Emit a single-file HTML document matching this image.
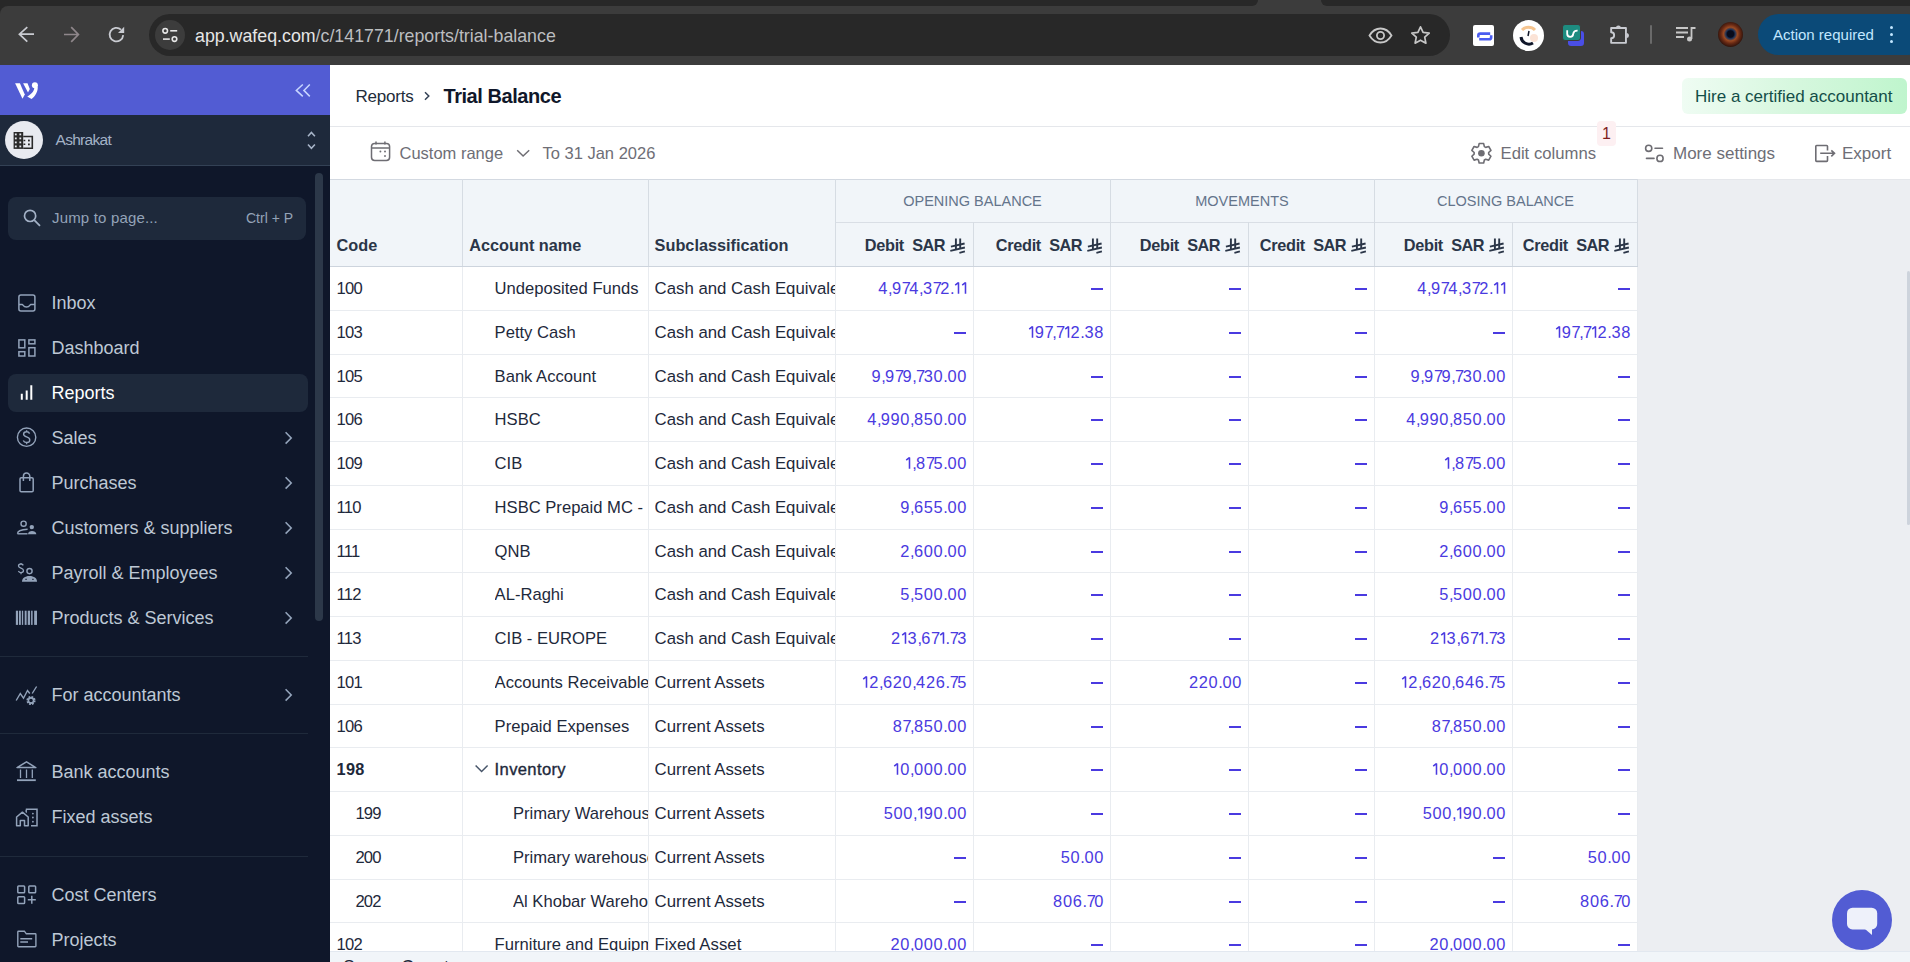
<!DOCTYPE html>
<html><head><meta charset="utf-8"><style>
html,body{margin:0;padding:0;width:1910px;height:962px;overflow:hidden;background:#fff;font-family:"Liberation Sans", sans-serif;}
div{box-sizing:border-box}
</style></head><body>
<div style="position:absolute;left:0px;top:0px;width:1910px;height:65px;background:#3c3c3c;"></div><div style="position:absolute;left:0px;top:0px;width:1258px;height:6px;background:#282828;border-bottom-right-radius:6px;"></div><div style="position:absolute;left:1321px;top:0px;width:589px;height:6px;background:#282828;border-bottom-left-radius:6px;"></div><div style="position:absolute;left:0px;top:6px;width:8px;height:8px;background:#282828;"></div><div style="position:absolute;left:0px;top:6px;width:16px;height:16px;background:#3c3c3c;border-top-left-radius:8px;"></div><div style="position:absolute;left:149px;top:14px;width:1301px;height:42px;background:#282828;border-radius:21px;"></div><div style="position:absolute;left:155px;top:20px;width:30px;height:30px;background:#3c3c3c;border-radius:15px;"></div><svg style="position:absolute;left:160px;top:25px;" width="20" height="20" viewBox="0 0 20 20" fill="none"><circle cx="5.2" cy="5.8" r="2.3" stroke="#e6e6e6" stroke-width="1.6"/><path d="M10.2 5.8h7" stroke="#e6e6e6" stroke-width="1.6"/><path d="M3 14.1h6.8" stroke="#e6e6e6" stroke-width="1.6"/><circle cx="14.5" cy="14.1" r="2.3" stroke="#e6e6e6" stroke-width="1.6"/></svg><svg style="position:absolute;left:14px;top:22px;" width="120" height="26" viewBox="0 0 120 26" fill="none"><path d="M20 12.2H5.2M13.3 5.2L5.4 12.2 13.3 19.6" stroke="#c9cbd1" stroke-width="1.7"/><path d="M50 12.5H64.4M57.2 5.2L64.4 12.5 57.2 19.8" stroke="#8f878b" stroke-width="1.7"/><path d="M109.2 13.2A6.8 6.8 0 1 1 107 7.6" stroke="#c9cbd1" stroke-width="1.8"/><path d="M104 11H110.2V4.8Z" fill="#c9cbd1"/></svg><div style="position:absolute;left:195px;top:23px;font-size:17.8px;line-height:27px;color:#bcbec0;font-weight:normal;letter-spacing:0px;white-space:nowrap;"><span style="color:#e6e6e6">app.wafeq.com</span>/c/141771/reports/trial-balance</div><svg style="position:absolute;left:1368px;top:27px;" width="25" height="17" viewBox="0 0 25 17" fill="none"><path d="M1.5 8.5C4.5 3.5 8 1.5 12.5 1.5S20.5 3.5 23.5 8.5C20.5 13.5 17 15.5 12.5 15.5S4.5 13.5 1.5 8.5Z" stroke="#c7c7c7" stroke-width="1.8"/><circle cx="12.5" cy="8.5" r="3.6" stroke="#c7c7c7" stroke-width="1.8"/></svg><svg style="position:absolute;left:1410px;top:25px;" width="21" height="20" viewBox="0 0 21 20" fill="none"><path d="M10.5 1.8l2.6 5.6 6.1.7-4.5 4.1 1.2 6-5.4-3-5.4 3 1.2-6-4.5-4.1 6.1-.7z" stroke="#c7c7c7" stroke-width="1.7" stroke-linejoin="round"/></svg><div style="position:absolute;left:1473px;top:25px;width:21px;height:21px;background:#ffffff;border-radius:2px;"></div><svg style="position:absolute;left:1473px;top:25px;" width="21" height="21" viewBox="0 0 21 21" fill="none"><path d="M5.3 12.6V10.6Q5.3 8.6 7.3 8.6H17.2" stroke="#4a5cf0" stroke-width="2.6"/><path d="M18.2 10.2V12.2Q18.2 14.3 16.2 14.3H6.2" stroke="#4a5cf0" stroke-width="2.6"/></svg><div style="position:absolute;left:1513px;top:20px;width:31px;height:31px;background:#ffffff;border-radius:50%;"></div><svg style="position:absolute;left:1516px;top:23px;" width="25" height="25" viewBox="0 0 25 25" fill="none"><path d="M6 7a9 9 0 0 1 13 0" stroke="#f6c590" stroke-width="3"/><path d="M5 14a8 8 0 0 0 12 6" stroke="#10172a" stroke-width="3"/><path d="M13 8l-1 5" stroke="#10172a" stroke-width="1.5"/><circle cx="18" cy="15" r="4" fill="#fbe3d6"/></svg><div style="position:absolute;left:1568px;top:31px;width:16px;height:15px;background:#4a4ee6;border-radius:3px;"></div><div style="position:absolute;left:1562px;top:24px;width:18.5px;height:16.5px;background:#1d8c80;border-radius:3px;border:1px solid #3c3c3c;"></div><svg style="position:absolute;left:1562px;top:24px;" width="20" height="18" viewBox="0 0 20 18" fill="none"><path d="M5.2 6.2V9.8A3 3 0 0 0 11.2 9.8Q11.8 6.4 15.6 6.6" stroke="#ffffff" stroke-width="1.8"/></svg><svg style="position:absolute;left:1606px;top:22px;" width="26" height="26" viewBox="0 0 26 26" fill="none"><path d="M5.15 6.05H19.95V20.85H5.15V16.2A3 3 0 0 0 5.15 10.2Z" stroke="#c9cbd1" stroke-width="1.9" stroke-linejoin="round"/><path d="M9.9 6.1A2.5 2.5 0 0 1 14.9 6.1Z" fill="#c9cbd1"/><path d="M20.4 10.9A2.5 2.5 0 0 1 20.4 15.9Z" fill="#c9cbd1"/></svg><div style="position:absolute;left:1650px;top:25px;width:2px;height:19px;background:#6a6a6a;border-radius:1px;"></div><svg style="position:absolute;left:1675px;top:26px;" width="22" height="16" viewBox="0 0 22 16" fill="none"><path d="M1 2h12M1 6.5h12M1 11h8" stroke="#c7c7c7" stroke-width="1.8"/><path d="M16.5 13V2h4" stroke="#c7c7c7" stroke-width="1.8"/><circle cx="14.5" cy="13" r="2.5" fill="#c7c7c7"/></svg><div style="position:absolute;left:1718px;top:22px;width:25px;height:25px;border-radius:50%;background:radial-gradient(circle at 50% 48%,#070b1c 0 18%,#1d3358 26%,#9a4a22 38%,#6a2a14 52%,#2e130c 72%,#1a0d0a 100%);"></div><div style="position:absolute;left:1758px;top:14px;width:170px;height:41px;background:#0b4a78;border-radius:21px;"></div><div style="position:absolute;left:1773px;top:24px;font-size:15.0px;line-height:22px;color:#c2e7ff;font-weight:normal;letter-spacing:0px;white-space:nowrap;">Action required</div><div style="position:absolute;left:1889.5px;top:25.9px;width:3.4px;height:3.4px;border-radius:50%;background:#c2e7ff"></div><div style="position:absolute;left:1889.5px;top:32.9px;width:3.4px;height:3.4px;border-radius:50%;background:#c2e7ff"></div><div style="position:absolute;left:1889.5px;top:39.9px;width:3.4px;height:3.4px;border-radius:50%;background:#c2e7ff"></div><div style="position:absolute;left:0px;top:65px;width:330px;height:897px;background:#0f172a;"></div><div style="position:absolute;left:0px;top:65px;width:330px;height:50px;background:#525cd3;"></div><div style="position:absolute;left:0px;top:115px;width:330px;height:50px;background:#1e293b;"></div><div style="position:absolute;left:0px;top:165px;width:330px;height:1px;background:#334155;"></div><svg style="position:absolute;left:10px;top:76px;" width="34" height="28" viewBox="0 0 34 28" fill="none"><path d="M5.1 7.3H9.9L14.8 18.6 12.5 22.7Z" fill="#fff"/><path d="M13.1 7.3H17.5L19.8 13.1 18 16.6Z" fill="#fff"/><circle cx="24.9" cy="9.3" r="3" fill="#fff"/><path d="M27.6 10.5C28.5 15 25 20.5 21.5 23L17.2 20.4C21 18.5 24 15.5 24.3 12Z" fill="#fff"/></svg><svg style="position:absolute;left:288.8px;top:78px;" width="30" height="26" viewBox="0 0 30 26" fill="none"><path d="M13.8 6.5L7.3 12.4 13.8 18.4M20.8 6.5L14.9 12.4 20.8 18.4" stroke="#c8d6ff" stroke-width="1.5"/></svg><div style="position:absolute;left:5px;top:121px;width:38px;height:38px;background:#e8eaf0;border-radius:50%;"></div><svg style="position:absolute;left:4px;top:118px;" width="42" height="44" viewBox="0 0 42 44" fill="none"><rect x="9.6" y="14" width="9.6" height="16.9" fill="#2a2a2a"/><rect x="10.9" y="15.5" width="1.8" height="1.8" fill="#e8eaf0"/><rect x="10.9" y="19.5" width="1.8" height="1.8" fill="#e8eaf0"/><rect x="10.9" y="23.5" width="1.8" height="1.8" fill="#e8eaf0"/><rect x="10.9" y="27.5" width="1.8" height="1.8" fill="#e8eaf0"/><rect x="15.4" y="15.5" width="1.8" height="1.8" fill="#e8eaf0"/><rect x="15.4" y="19.5" width="1.8" height="1.8" fill="#e8eaf0"/><rect x="15.4" y="23.5" width="1.8" height="1.8" fill="#e8eaf0"/><rect x="15.4" y="27.5" width="1.8" height="1.8" fill="#e8eaf0"/><path d="M19.2 18.5H28.3V30.2H19.2" stroke="#2a2a2a" stroke-width="1.6"/><rect x="24" y="21.6" width="1.8" height="1.8" fill="#2a2a2a"/><rect x="24" y="25.5" width="1.8" height="1.8" fill="#2a2a2a"/><path d="M19.5 22.4h1.8M19.5 26.3h1.8" stroke="#2a2a2a" stroke-width="1.5"/></svg><div style="position:absolute;left:55.5px;top:128px;font-size:15.5px;line-height:23px;color:#a3b2c7;font-weight:normal;letter-spacing:-0.7px;white-space:nowrap;">Ashrakat</div><svg style="position:absolute;left:296px;top:125px;" width="30" height="30" viewBox="0 0 30 30" fill="none"><path d="M12 11.2L15.4 7.5 18.9 11.2M12 19.5L15.4 23.3 18.9 19.5" stroke="#a7b4c8" stroke-width="1.6"/></svg><div style="position:absolute;left:315px;top:173px;width:8px;height:448px;background:#2c3849;border-radius:4px;"></div><div style="position:absolute;left:8px;top:197px;width:298px;height:43px;background:#1e293b;border-radius:8px;"></div><svg style="position:absolute;left:14px;top:200px;" width="36" height="36" viewBox="0 0 36 36" fill="none"><circle cx="16.1" cy="15.9" r="5.6" stroke="#a3b1c6" stroke-width="1.7"/><path d="M20.3 20.2L26 25.8" stroke="#a3b1c6" stroke-width="1.8"/></svg><div style="position:absolute;left:52px;top:207px;font-size:15.0px;line-height:22px;color:#94a3b8;font-weight:normal;letter-spacing:0.17px;white-space:nowrap;">Jump to page...</div><div style="position:absolute;left:246px;top:208px;font-size:14.0px;line-height:21px;color:#94a3b8;font-weight:normal;letter-spacing:0px;white-space:nowrap;">Ctrl + P</div><div style="position:absolute;left:8px;top:374px;width:300px;height:37.5px;background:#1e293b;border-radius:8px;"></div><div style="position:absolute;left:51.5px;top:290px;font-size:18.0px;line-height:27px;color:#bec8d5;font-weight:normal;letter-spacing:0px;white-space:nowrap;">Inbox</div><div style="position:absolute;left:51.5px;top:335px;font-size:18.0px;line-height:27px;color:#bec8d5;font-weight:normal;letter-spacing:0px;white-space:nowrap;">Dashboard</div><div style="position:absolute;left:51.5px;top:380px;font-size:18.0px;line-height:27px;color:#ffffff;font-weight:normal;letter-spacing:0px;white-space:nowrap;">Reports</div><div style="position:absolute;left:51.5px;top:425px;font-size:18.0px;line-height:27px;color:#bec8d5;font-weight:normal;letter-spacing:0px;white-space:nowrap;">Sales</div><svg style="position:absolute;left:280px;top:429.5px" width="18" height="16" viewBox="0 0 18 16" fill="none"><path d="M5.6 2.3L11.2 8 5.6 13.6" stroke="#93a3ba" stroke-width="1.6"/></svg><div style="position:absolute;left:51.5px;top:470px;font-size:18.0px;line-height:27px;color:#bec8d5;font-weight:normal;letter-spacing:0px;white-space:nowrap;">Purchases</div><svg style="position:absolute;left:280px;top:474.5px" width="18" height="16" viewBox="0 0 18 16" fill="none"><path d="M5.6 2.3L11.2 8 5.6 13.6" stroke="#93a3ba" stroke-width="1.6"/></svg><div style="position:absolute;left:51.5px;top:515px;font-size:18.0px;line-height:27px;color:#bec8d5;font-weight:normal;letter-spacing:0px;white-space:nowrap;">Customers &amp; suppliers</div><svg style="position:absolute;left:280px;top:519.5px" width="18" height="16" viewBox="0 0 18 16" fill="none"><path d="M5.6 2.3L11.2 8 5.6 13.6" stroke="#93a3ba" stroke-width="1.6"/></svg><div style="position:absolute;left:51.5px;top:560px;font-size:18.0px;line-height:27px;color:#bec8d5;font-weight:normal;letter-spacing:0px;white-space:nowrap;">Payroll &amp; Employees</div><svg style="position:absolute;left:280px;top:564.5px" width="18" height="16" viewBox="0 0 18 16" fill="none"><path d="M5.6 2.3L11.2 8 5.6 13.6" stroke="#93a3ba" stroke-width="1.6"/></svg><div style="position:absolute;left:51.5px;top:605px;font-size:18.0px;line-height:27px;color:#bec8d5;font-weight:normal;letter-spacing:0px;white-space:nowrap;">Products &amp; Services</div><svg style="position:absolute;left:280px;top:609.5px" width="18" height="16" viewBox="0 0 18 16" fill="none"><path d="M5.6 2.3L11.2 8 5.6 13.6" stroke="#93a3ba" stroke-width="1.6"/></svg><div style="position:absolute;left:51.5px;top:682px;font-size:18.0px;line-height:27px;color:#bec8d5;font-weight:normal;letter-spacing:0px;white-space:nowrap;">For accountants</div><svg style="position:absolute;left:280px;top:686.5px" width="18" height="16" viewBox="0 0 18 16" fill="none"><path d="M5.6 2.3L11.2 8 5.6 13.6" stroke="#93a3ba" stroke-width="1.6"/></svg><div style="position:absolute;left:51.5px;top:759px;font-size:18.0px;line-height:27px;color:#bec8d5;font-weight:normal;letter-spacing:0px;white-space:nowrap;">Bank accounts</div><div style="position:absolute;left:51.5px;top:804px;font-size:18.0px;line-height:27px;color:#bec8d5;font-weight:normal;letter-spacing:0px;white-space:nowrap;">Fixed assets</div><div style="position:absolute;left:51.5px;top:882px;font-size:18.0px;line-height:27px;color:#bec8d5;font-weight:normal;letter-spacing:0px;white-space:nowrap;">Cost Centers</div><div style="position:absolute;left:51.5px;top:927px;font-size:18.0px;line-height:27px;color:#bec8d5;font-weight:normal;letter-spacing:0px;white-space:nowrap;">Projects</div><div style="position:absolute;left:0px;top:656px;width:308px;height:1px;background:#1f2a3b;"></div><div style="position:absolute;left:0px;top:733px;width:308px;height:1px;background:#1f2a3b;"></div><div style="position:absolute;left:0px;top:856px;width:308px;height:1px;background:#1f2a3b;"></div><svg style="position:absolute;left:12px;top:288px;" width="30" height="30" viewBox="0 0 30 30" fill="none"><rect x="6.9" y="6.9" width="16" height="16" rx="2" stroke="#93a3ba" stroke-width="1.5"/><path d="M7 16.5H10.3C11 16.5 11.3 19 14.5 19S18 16.5 18.7 16.5H22.8" stroke="#93a3ba" stroke-width="1.5"/></svg><svg style="position:absolute;left:12px;top:333px;" width="30" height="30" viewBox="0 0 30 30" fill="none"><rect x="6.9" y="6.9" width="5.9" height="7.9" stroke="#93a3ba" stroke-width="1.5"/><rect x="16.9" y="6.9" width="6" height="3.9" stroke="#93a3ba" stroke-width="1.5"/><rect x="6.9" y="18.7" width="5.9" height="4.3" stroke="#93a3ba" stroke-width="1.5"/><rect x="16.9" y="14.7" width="6" height="8.3" stroke="#93a3ba" stroke-width="1.5"/></svg><svg style="position:absolute;left:12px;top:380px;" width="30" height="30" viewBox="0 0 30 30" fill="none"><path d="M9.8 13.8V19.8M14.7 10.5V19.8M19.3 5.2V19.8" stroke="#fff" stroke-width="2"/></svg><svg style="position:absolute;left:12px;top:423px;" width="30" height="30" viewBox="0 0 30 30" fill="none"><circle cx="14.6" cy="14.2" r="9.2" stroke="#93a3ba" stroke-width="1.4"/><path d="M17.6 10.6C17 9.3 15.9 8.8 14.6 8.8 12.8 8.8 11.6 9.8 11.6 11.3 11.6 14.5 17.8 13.4 17.8 16.9 17.8 18.5 16.4 19.5 14.6 19.5 13 19.5 11.8 18.8 11.3 17.5M14.6 7.2V8.8M14.6 19.5V21.2" stroke="#93a3ba" stroke-width="1.4"/></svg><svg style="position:absolute;left:12px;top:468px;" width="30" height="30" viewBox="0 0 30 30" fill="none"><rect x="8" y="9.8" width="13.2" height="14" rx="1.3" stroke="#93a3ba" stroke-width="1.5"/><path d="M11.4 13V8.2A3.2 3.2 0 0 1 17.8 8.2V13" stroke="#93a3ba" stroke-width="1.5"/></svg><svg style="position:absolute;left:12px;top:513px;" width="30" height="30" viewBox="0 0 30 30" fill="none"><circle cx="11.6" cy="10.7" r="2.6" stroke="#93a3ba" stroke-width="1.4"/><path d="M5.5 20.8C5.5 18 8.5 16.6 15.6 16.3" stroke="#93a3ba" stroke-width="1.4"/><path d="M5.5 20.8H15.5" stroke="#93a3ba" stroke-width="1.4"/><circle cx="19.8" cy="14.1" r="2.2" fill="#93a3ba"/><path d="M16 21.2C16 18.8 18 17.9 20 17.9S24.3 18.8 24.3 21.2Z" fill="#93a3ba"/></svg><svg style="position:absolute;left:12px;top:558px;" width="30" height="30" viewBox="0 0 30 30" fill="none"><path d="M11.3 7.4C10.8 6.4 10 6 9 6 7.6 6 6.5 6.8 6.5 8 6.5 10.5 11.5 9.7 11.5 12.5 11.5 13.8 10.4 14.6 9 14.6 7.7 14.6 6.9 14 6.4 13M9 4.9V6M9 14.6V16.2" stroke="#93a3ba" stroke-width="1.3"/><circle cx="17.5" cy="13.1" r="2.6" stroke="#93a3ba" stroke-width="1.4"/><path d="M10 23.8C10 20.3 13 18.1 17.5 18.1S25 20.3 25 23.8Z" fill="#93a3ba"/><path d="M13.3 21.3h1.5M20.2 21.3h1.5" stroke="#0f172a" stroke-width="1"/></svg><svg style="position:absolute;left:12px;top:603px;" width="30" height="30" viewBox="0 0 30 30" fill="none"><rect x="3.85" y="7.7" width="2.15" height="14.2" fill="#93a3ba"/><rect x="6.92" y="7.7" width="1.92" height="14.2" fill="#93a3ba"/><rect x="9.85" y="7.7" width="1.31" height="14.2" fill="#93a3ba"/><rect x="12.69" y="7.7" width="1.92" height="14.2" fill="#93a3ba"/><rect x="15.77" y="7.7" width="2.31" height="14.2" fill="#93a3ba"/><rect x="19.08" y="7.7" width="1.54" height="14.2" fill="#93a3ba"/><rect x="22.15" y="7.7" width="2.85" height="14.2" fill="#93a3ba"/></svg><svg style="position:absolute;left:12px;top:680px;" width="30" height="32" viewBox="0 0 30 32" fill="none"><path d="M4.2 20.5L8.3 13.5 11.5 18.2 15.5 10.5 17.8 13.5M20.2 13.5L24.6 6.5" stroke="#93a3ba" stroke-width="1.4"/><circle cx="19" cy="20.5" r="3.4" stroke="#93a3ba" stroke-width="2.4" stroke-dasharray="1.6 1.07"/><circle cx="19" cy="20.5" r="2.6" stroke="#93a3ba" stroke-width="1.6"/></svg><svg style="position:absolute;left:12px;top:758px;" width="30" height="30" viewBox="0 0 30 30" fill="none"><path d="M5 9.6L14.5 3.8 23.8 9.6Z" stroke="#93a3ba" stroke-width="1.5" stroke-linejoin="round"/><path d="M8.5 11.5V20M14.5 11.5V20M20.3 11.5V20" stroke="#93a3ba" stroke-width="1.3"/><path d="M5 22.2H23.8" stroke="#93a3ba" stroke-width="1.8"/></svg><svg style="position:absolute;left:12px;top:803px;" width="30" height="30" viewBox="0 0 30 30" fill="none"><path d="M4.6 22.8V14L10.4 9.2 16.2 14V22.8H12.5V17.5H8.3V22.8Z" stroke="#93a3ba" stroke-width="1.5" stroke-linejoin="round"/><path d="M14.2 6.8V9H13.8M13.8 6.2H25V22.8H19" stroke="#93a3ba" stroke-width="1.5"/><circle cx="20.9" cy="10.6" r="0.9" fill="#93a3ba"/><circle cx="20.9" cy="14.5" r="0.9" fill="#93a3ba"/><circle cx="20.9" cy="18.7" r="0.9" fill="#93a3ba"/></svg><svg style="position:absolute;left:12px;top:880px;" width="30" height="30" viewBox="0 0 30 30" fill="none"><rect x="5.8" y="5.9" width="6.8" height="6.8" rx="0.8" stroke="#93a3ba" stroke-width="1.5"/><rect x="16.8" y="5.9" width="6.8" height="6.8" rx="0.8" stroke="#93a3ba" stroke-width="1.5"/><rect x="5.8" y="16.8" width="6.8" height="6.8" rx="0.8" stroke="#93a3ba" stroke-width="1.5"/><path d="M19.8 15.8V23.8M15.8 19.8H23.8" stroke="#93a3ba" stroke-width="1.5"/></svg><svg style="position:absolute;left:12px;top:925px;" width="30" height="30" viewBox="0 0 30 30" fill="none"><path d="M5.8 6.9C5.8 6.5 6.1 6.2 6.5 6.2H12.4L14.3 8.8H23.2C23.6 8.8 23.9 9.1 23.9 9.5V21C23.9 21.4 23.6 21.7 23.2 21.7H6.5C6.1 21.7 5.8 21.4 5.8 21Z" stroke="#93a3ba" stroke-width="1.4"/><path d="M8.3 13.7H20.2M8.3 16.9H16" stroke="#93a3ba" stroke-width="1.5"/></svg><div style="position:absolute;left:330px;top:65px;width:1580px;height:897px;background:#ffffff;"></div><div style="position:absolute;left:330px;top:126px;width:1580px;height:1px;background:#e5e7eb;"></div><div style="position:absolute;left:355.5px;top:84px;font-size:17.0px;line-height:26px;color:#222c3a;font-weight:normal;letter-spacing:-0.2px;white-space:nowrap;">Reports</div><svg style="position:absolute;left:418px;top:88px;" width="18" height="16" viewBox="0 0 18 16" fill="none"><path d="M7 4.2L10.8 8 7 11.8" stroke="#334155" stroke-width="1.5"/></svg><div style="position:absolute;left:443.5px;top:81px;font-size:20.0px;line-height:30px;color:#0f172a;font-weight:bold;letter-spacing:-0.45px;white-space:nowrap;">Trial Balance</div><div style="position:absolute;left:1682px;top:78px;width:225px;height:36px;border-radius:6px;background:linear-gradient(90deg,#effcf3 0%,#d6f7de 50%,#bff5cd 100%);"></div><div style="position:absolute;left:1695px;top:84px;font-size:17.0px;line-height:26px;color:#134e48;font-weight:normal;letter-spacing:0px;white-space:nowrap;">Hire a certified accountant</div><svg style="position:absolute;left:366px;top:138px;" width="30" height="28" viewBox="0 0 30 28" fill="none"><rect x="5.5" y="5.4" width="18.1" height="17" rx="3.2" stroke="#6e6d73" stroke-width="1.5"/><path d="M5.5 10H23.6M10 3.5V6.5M18.9 3.5V6.5" stroke="#6e6d73" stroke-width="1.5"/><circle cx="14.4" cy="13.5" r="0.95" fill="#6e6d73"/><circle cx="19" cy="13.5" r="0.95" fill="#6e6d73"/><circle cx="19" cy="18" r="0.95" fill="#6e6d73"/></svg><div style="position:absolute;left:399.5px;top:141px;font-size:16.5px;line-height:25px;color:#6e6e76;font-weight:normal;letter-spacing:0px;white-space:nowrap;">Custom range</div><svg style="position:absolute;left:514px;top:144px;" width="18" height="18" viewBox="0 0 18 18" fill="none"><path d="M3.2 6.3L9.1 12 15.2 6.3" stroke="#6e6d73" stroke-width="1.5"/></svg><div style="position:absolute;left:542.5px;top:141px;font-size:16.5px;line-height:25px;color:#6e6e76;font-weight:normal;letter-spacing:0px;white-space:nowrap;">To 31 Jan 2026</div><svg style="position:absolute;left:1466px;top:139px;" width="30" height="28" viewBox="0 0 30 28" fill="none"><path d="M13.15 4.56 L17.65 4.56 L18.37 7.63 L19.69 8.39 L22.71 7.48 L24.96 11.38 L22.66 13.54 L22.66 15.06 L24.96 17.22 L22.71 21.12 L19.69 20.21 L18.37 20.97 L17.65 24.04 L13.15 24.04 L12.43 20.97 L11.11 20.21 L8.09 21.12 L5.84 17.22 L8.14 15.06 L8.14 13.54 L5.84 11.38 L8.09 7.48 L11.11 8.39 L12.43 7.63Z" stroke="#6e6d73" stroke-width="1.6" stroke-linejoin="round"/><circle cx="15.4" cy="14.3" r="3.3" fill="#6e6d73"/></svg><div style="position:absolute;left:1500.5px;top:141px;font-size:16.7px;line-height:25px;color:#6e6e76;font-weight:normal;letter-spacing:0px;white-space:nowrap;">Edit columns</div><div style="position:absolute;left:1597px;top:121px;width:19px;height:25px;background:#fdf0f2;border-radius:4px;"></div><div style="position:absolute;left:1602px;top:122px;font-size:16.0px;line-height:24px;color:#7f1d1d;font-weight:normal;letter-spacing:0px;white-space:nowrap;">1</div><svg style="position:absolute;left:1640px;top:139px;" width="30" height="28" viewBox="0 0 30 28" fill="none"><circle cx="8.7" cy="9.3" r="3.1" stroke="#6e6d73" stroke-width="1.6"/><path d="M15 9.3H22.5M6.5 19.4H14" stroke="#6e6d73" stroke-width="1.6" stroke-linecap="round"/><circle cx="20" cy="19.4" r="3.1" stroke="#6e6d73" stroke-width="1.6"/></svg><div style="position:absolute;left:1673px;top:141px;font-size:17.0px;line-height:26px;color:#6e6e76;font-weight:normal;letter-spacing:0px;white-space:nowrap;">More settings</div><svg style="position:absolute;left:1810px;top:139px;" width="30" height="28" viewBox="0 0 30 28" fill="none"><path d="M17.5 11.5V7.3C17.5 6.8 17.1 6.5 16.6 6.5H6.6C6.1 6.5 5.8 6.8 5.8 7.3V21.6C5.8 22.1 6.1 22.4 6.6 22.4H16.6C17.1 22.4 17.5 22.1 17.5 21.6V17" stroke="#6e6d73" stroke-width="1.6"/><path d="M10.2 14.3H24M21.3 11.3L24.5 14.3 21.3 17.4" stroke="#6e6d73" stroke-width="1.6"/></svg><div style="position:absolute;left:1842px;top:141px;font-size:17.0px;line-height:26px;color:#6e6e76;font-weight:normal;letter-spacing:0px;white-space:nowrap;">Export</div><div style="position:absolute;left:1638px;top:179px;width:272px;height:772px;background:#eceef2;"></div><div style="position:absolute;left:330px;top:179px;width:1580px;height:1px;background:#e5e7eb;"></div><div style="position:absolute;left:330px;top:179px;width:1308px;height:87px;background:#f1f5f9;"></div><div style="position:absolute;left:330px;top:179px;width:1308px;height:1px;background:#d3d9e1;"></div><div style="position:absolute;left:330px;top:266px;width:1308px;height:1px;background:#cdd4dd;"></div><div style="position:absolute;left:835px;top:222px;width:803px;height:1px;background:#d9dee5;"></div><div style="position:absolute;left:462px;top:179px;width:1px;height:87px;background:#d6dce3;"></div><div style="position:absolute;left:648px;top:179px;width:1px;height:87px;background:#d6dce3;"></div><div style="position:absolute;left:835px;top:179px;width:1px;height:87px;background:#d6dce3;"></div><div style="position:absolute;left:973px;top:222px;width:1px;height:44px;background:#d6dce3;"></div><div style="position:absolute;left:1110px;top:179px;width:1px;height:87px;background:#d6dce3;"></div><div style="position:absolute;left:1248px;top:222px;width:1px;height:44px;background:#d6dce3;"></div><div style="position:absolute;left:1374px;top:179px;width:1px;height:87px;background:#d6dce3;"></div><div style="position:absolute;left:1512px;top:222px;width:1px;height:44px;background:#d6dce3;"></div><div style="position:absolute;left:1637px;top:179px;width:1px;height:87px;background:#d6dce3;"></div><div style="position:absolute;left:336.5px;top:233px;font-size:16.3px;line-height:24px;color:#2b3648;font-weight:bold;letter-spacing:0px;white-space:nowrap;">Code</div><div style="position:absolute;left:469.2px;top:233px;font-size:16.3px;line-height:24px;color:#2b3648;font-weight:bold;letter-spacing:0px;white-space:nowrap;">Account name</div><div style="position:absolute;left:654.6px;top:233px;font-size:16.3px;line-height:24px;color:#2b3648;font-weight:bold;letter-spacing:0px;white-space:nowrap;">Subclassification</div><div style="position:absolute;left:835px;width:275.0px;top:190px;font-size:14.5px;line-height:22px;color:#64748b;text-align:center;white-space:nowrap">OPENING BALANCE</div><div style="position:absolute;left:1110px;width:264.0px;top:190px;font-size:14.5px;line-height:22px;color:#64748b;text-align:center;white-space:nowrap">MOVEMENTS</div><div style="position:absolute;left:1374px;width:263.0px;top:190px;font-size:14.5px;line-height:22px;color:#64748b;text-align:center;white-space:nowrap">CLOSING BALANCE</div><div style="position:absolute;left:950.0px;top:237.5px;width:16px;height:16px"><svg width="16" height="16" viewBox="0 0 16 16" fill="none" style="position:absolute;right:0;top:0"><path d="M5.9 0.4V11.4M10.2 0.4V10.1" stroke="#2b3648" stroke-width="1.9"/><path d="M0.9 8.7L14.6 5.5M0.3 12.8L14.9 9.5M9.4 14.8L14.9 13.4" stroke="#2b3648" stroke-width="1.8"/></svg></div><div style="position:absolute;right:965.10px;top:233px;font-size:16.3px;line-height:24px;color:#2b3648;font-weight:bold;letter-spacing:-0.6px;white-space:nowrap;">SAR</div><div style="position:absolute;right:1006.00px;top:233px;font-size:16.3px;line-height:24px;color:#2b3648;font-weight:bold;letter-spacing:-0.3px;white-space:nowrap;">Debit</div><div style="position:absolute;left:1087.0px;top:237.5px;width:16px;height:16px"><svg width="16" height="16" viewBox="0 0 16 16" fill="none" style="position:absolute;right:0;top:0"><path d="M5.9 0.4V11.4M10.2 0.4V10.1" stroke="#2b3648" stroke-width="1.9"/><path d="M0.9 8.7L14.6 5.5M0.3 12.8L14.9 9.5M9.4 14.8L14.9 13.4" stroke="#2b3648" stroke-width="1.8"/></svg></div><div style="position:absolute;right:828.10px;top:233px;font-size:16.3px;line-height:24px;color:#2b3648;font-weight:bold;letter-spacing:-0.6px;white-space:nowrap;">SAR</div><div style="position:absolute;right:869.00px;top:233px;font-size:16.3px;line-height:24px;color:#2b3648;font-weight:bold;letter-spacing:-0.3px;white-space:nowrap;">Credit</div><div style="position:absolute;left:1225.0px;top:237.5px;width:16px;height:16px"><svg width="16" height="16" viewBox="0 0 16 16" fill="none" style="position:absolute;right:0;top:0"><path d="M5.9 0.4V11.4M10.2 0.4V10.1" stroke="#2b3648" stroke-width="1.9"/><path d="M0.9 8.7L14.6 5.5M0.3 12.8L14.9 9.5M9.4 14.8L14.9 13.4" stroke="#2b3648" stroke-width="1.8"/></svg></div><div style="position:absolute;right:690.10px;top:233px;font-size:16.3px;line-height:24px;color:#2b3648;font-weight:bold;letter-spacing:-0.6px;white-space:nowrap;">SAR</div><div style="position:absolute;right:731.00px;top:233px;font-size:16.3px;line-height:24px;color:#2b3648;font-weight:bold;letter-spacing:-0.3px;white-space:nowrap;">Debit</div><div style="position:absolute;left:1351.0px;top:237.5px;width:16px;height:16px"><svg width="16" height="16" viewBox="0 0 16 16" fill="none" style="position:absolute;right:0;top:0"><path d="M5.9 0.4V11.4M10.2 0.4V10.1" stroke="#2b3648" stroke-width="1.9"/><path d="M0.9 8.7L14.6 5.5M0.3 12.8L14.9 9.5M9.4 14.8L14.9 13.4" stroke="#2b3648" stroke-width="1.8"/></svg></div><div style="position:absolute;right:564.10px;top:233px;font-size:16.3px;line-height:24px;color:#2b3648;font-weight:bold;letter-spacing:-0.6px;white-space:nowrap;">SAR</div><div style="position:absolute;right:605.00px;top:233px;font-size:16.3px;line-height:24px;color:#2b3648;font-weight:bold;letter-spacing:-0.3px;white-space:nowrap;">Credit</div><div style="position:absolute;left:1489.0px;top:237.5px;width:16px;height:16px"><svg width="16" height="16" viewBox="0 0 16 16" fill="none" style="position:absolute;right:0;top:0"><path d="M5.9 0.4V11.4M10.2 0.4V10.1" stroke="#2b3648" stroke-width="1.9"/><path d="M0.9 8.7L14.6 5.5M0.3 12.8L14.9 9.5M9.4 14.8L14.9 13.4" stroke="#2b3648" stroke-width="1.8"/></svg></div><div style="position:absolute;right:426.10px;top:233px;font-size:16.3px;line-height:24px;color:#2b3648;font-weight:bold;letter-spacing:-0.6px;white-space:nowrap;">SAR</div><div style="position:absolute;right:467.00px;top:233px;font-size:16.3px;line-height:24px;color:#2b3648;font-weight:bold;letter-spacing:-0.3px;white-space:nowrap;">Debit</div><div style="position:absolute;left:1614.0px;top:237.5px;width:16px;height:16px"><svg width="16" height="16" viewBox="0 0 16 16" fill="none" style="position:absolute;right:0;top:0"><path d="M5.9 0.4V11.4M10.2 0.4V10.1" stroke="#2b3648" stroke-width="1.9"/><path d="M0.9 8.7L14.6 5.5M0.3 12.8L14.9 9.5M9.4 14.8L14.9 13.4" stroke="#2b3648" stroke-width="1.8"/></svg></div><div style="position:absolute;right:301.10px;top:233px;font-size:16.3px;line-height:24px;color:#2b3648;font-weight:bold;letter-spacing:-0.6px;white-space:nowrap;">SAR</div><div style="position:absolute;right:342.00px;top:233px;font-size:16.3px;line-height:24px;color:#2b3648;font-weight:bold;letter-spacing:-0.3px;white-space:nowrap;">Credit</div><div style="position:absolute;left:336.6px;top:276px;font-size:16.6px;line-height:25px;color:#1e293b;font-weight:normal;letter-spacing:-0.8px;white-space:nowrap;">100</div><div style="position:absolute;left:494.6px;top:266px;width:153.4px;height:43px;overflow:hidden"><div style="position:absolute;left:0px;top:10px;font-size:16.6px;line-height:25px;color:#1e293b;font-weight:normal;letter-spacing:0.0px;white-space:nowrap;">Undeposited Funds</div></div><div style="position:absolute;left:654.6px;top:266px;width:180.4px;height:43px;overflow:hidden"><div style="position:absolute;left:0px;top:10px;font-size:16.8px;line-height:25px;color:#1e293b;font-weight:normal;letter-spacing:0.0px;white-space:nowrap;">Cash and Cash Equivalents</div></div><div style="position:absolute;right:941.95px;top:276px;font-size:16.4px;line-height:25px;color:#4a3ae0;font-weight:normal;letter-spacing:0px;white-space:nowrap;"><span style="letter-spacing:0.68px">4</span><span style="letter-spacing:-0.76px">,</span><span style="letter-spacing:0.68px">9</span><span style="letter-spacing:-1.52px">7</span><span style="letter-spacing:0.68px">4</span><span style="letter-spacing:-0.76px">,</span><span style="letter-spacing:0.68px">3</span><span style="letter-spacing:-1.52px">7</span><span style="letter-spacing:0.68px">2</span><span style="letter-spacing:-0.36px">.</span><svg width="6.9" height="11.8" viewBox="0 0 6.9 11.8" style="vertical-align:baseline"><path d="M4.5 11.8V0.5M4.7 0.4L1.2 3.1" stroke="#4a3ae0" stroke-width="1.55" fill="none"/></svg><svg width="6.9" height="11.8" viewBox="0 0 6.9 11.8" style="vertical-align:baseline"><path d="M4.5 11.8V0.5M4.7 0.4L1.2 3.1" stroke="#4a3ae0" stroke-width="1.55" fill="none"/></svg></div><div style="position:absolute;left:1090.5px;top:288px;width:12.5px;height:2px;background:#4a3ae0;"></div><div style="position:absolute;left:1228.5px;top:288px;width:12.5px;height:2px;background:#4a3ae0;"></div><div style="position:absolute;left:1354.5px;top:288px;width:12.5px;height:2px;background:#4a3ae0;"></div><div style="position:absolute;right:402.95px;top:276px;font-size:16.4px;line-height:25px;color:#4a3ae0;font-weight:normal;letter-spacing:0px;white-space:nowrap;"><span style="letter-spacing:0.68px">4</span><span style="letter-spacing:-0.76px">,</span><span style="letter-spacing:0.68px">9</span><span style="letter-spacing:-1.52px">7</span><span style="letter-spacing:0.68px">4</span><span style="letter-spacing:-0.76px">,</span><span style="letter-spacing:0.68px">3</span><span style="letter-spacing:-1.52px">7</span><span style="letter-spacing:0.68px">2</span><span style="letter-spacing:-0.36px">.</span><svg width="6.9" height="11.8" viewBox="0 0 6.9 11.8" style="vertical-align:baseline"><path d="M4.5 11.8V0.5M4.7 0.4L1.2 3.1" stroke="#4a3ae0" stroke-width="1.55" fill="none"/></svg><svg width="6.9" height="11.8" viewBox="0 0 6.9 11.8" style="vertical-align:baseline"><path d="M4.5 11.8V0.5M4.7 0.4L1.2 3.1" stroke="#4a3ae0" stroke-width="1.55" fill="none"/></svg></div><div style="position:absolute;left:1617.5px;top:288px;width:12.5px;height:2px;background:#4a3ae0;"></div><div style="position:absolute;left:330px;top:310px;width:1308px;height:1px;background:#e9ecf0;"></div><div style="position:absolute;left:336.6px;top:320px;font-size:16.6px;line-height:25px;color:#1e293b;font-weight:normal;letter-spacing:-0.8px;white-space:nowrap;">103</div><div style="position:absolute;left:494.6px;top:310px;width:153.4px;height:43px;overflow:hidden"><div style="position:absolute;left:0px;top:10px;font-size:16.6px;line-height:25px;color:#1e293b;font-weight:normal;letter-spacing:0.0px;white-space:nowrap;">Petty Cash</div></div><div style="position:absolute;left:654.6px;top:310px;width:180.4px;height:43px;overflow:hidden"><div style="position:absolute;left:0px;top:10px;font-size:16.8px;line-height:25px;color:#1e293b;font-weight:normal;letter-spacing:0.0px;white-space:nowrap;">Cash and Cash Equivalents</div></div><div style="position:absolute;left:953.5px;top:332px;width:12.5px;height:2px;background:#4a3ae0;"></div><div style="position:absolute;right:805.92px;top:320px;font-size:16.4px;line-height:25px;color:#4a3ae0;font-weight:normal;letter-spacing:0px;white-space:nowrap;"><svg width="6.9" height="11.8" viewBox="0 0 6.9 11.8" style="vertical-align:baseline"><path d="M4.5 11.8V0.5M4.7 0.4L1.2 3.1" stroke="#4a3ae0" stroke-width="1.55" fill="none"/></svg><span style="letter-spacing:0.68px">9</span><span style="letter-spacing:-1.52px">7</span><span style="letter-spacing:-0.76px">,</span><span style="letter-spacing:-1.52px">7</span><svg width="6.9" height="11.8" viewBox="0 0 6.9 11.8" style="vertical-align:baseline"><path d="M4.5 11.8V0.5M4.7 0.4L1.2 3.1" stroke="#4a3ae0" stroke-width="1.55" fill="none"/></svg><span style="letter-spacing:0.68px">2</span><span style="letter-spacing:-0.36px">.</span><span style="letter-spacing:0.68px">3</span><span style="letter-spacing:0.68px">8</span></div><div style="position:absolute;left:1228.5px;top:332px;width:12.5px;height:2px;background:#4a3ae0;"></div><div style="position:absolute;left:1354.5px;top:332px;width:12.5px;height:2px;background:#4a3ae0;"></div><div style="position:absolute;left:1492.5px;top:332px;width:12.5px;height:2px;background:#4a3ae0;"></div><div style="position:absolute;right:278.92px;top:320px;font-size:16.4px;line-height:25px;color:#4a3ae0;font-weight:normal;letter-spacing:0px;white-space:nowrap;"><svg width="6.9" height="11.8" viewBox="0 0 6.9 11.8" style="vertical-align:baseline"><path d="M4.5 11.8V0.5M4.7 0.4L1.2 3.1" stroke="#4a3ae0" stroke-width="1.55" fill="none"/></svg><span style="letter-spacing:0.68px">9</span><span style="letter-spacing:-1.52px">7</span><span style="letter-spacing:-0.76px">,</span><span style="letter-spacing:-1.52px">7</span><svg width="6.9" height="11.8" viewBox="0 0 6.9 11.8" style="vertical-align:baseline"><path d="M4.5 11.8V0.5M4.7 0.4L1.2 3.1" stroke="#4a3ae0" stroke-width="1.55" fill="none"/></svg><span style="letter-spacing:0.68px">2</span><span style="letter-spacing:-0.36px">.</span><span style="letter-spacing:0.68px">3</span><span style="letter-spacing:0.68px">8</span></div><div style="position:absolute;left:330px;top:354px;width:1308px;height:1px;background:#e9ecf0;"></div><div style="position:absolute;left:336.6px;top:364px;font-size:16.6px;line-height:25px;color:#1e293b;font-weight:normal;letter-spacing:-0.8px;white-space:nowrap;">105</div><div style="position:absolute;left:494.6px;top:354px;width:153.4px;height:43px;overflow:hidden"><div style="position:absolute;left:0px;top:10px;font-size:16.6px;line-height:25px;color:#1e293b;font-weight:normal;letter-spacing:0.0px;white-space:nowrap;">Bank Account</div></div><div style="position:absolute;left:654.6px;top:354px;width:180.4px;height:43px;overflow:hidden"><div style="position:absolute;left:0px;top:10px;font-size:16.8px;line-height:25px;color:#1e293b;font-weight:normal;letter-spacing:0.0px;white-space:nowrap;">Cash and Cash Equivalents</div></div><div style="position:absolute;right:942.92px;top:364px;font-size:16.4px;line-height:25px;color:#4a3ae0;font-weight:normal;letter-spacing:0px;white-space:nowrap;"><span style="letter-spacing:0.68px">9</span><span style="letter-spacing:-0.76px">,</span><span style="letter-spacing:0.68px">9</span><span style="letter-spacing:-1.52px">7</span><span style="letter-spacing:0.68px">9</span><span style="letter-spacing:-0.76px">,</span><span style="letter-spacing:-1.52px">7</span><span style="letter-spacing:0.68px">3</span><span style="letter-spacing:0.68px">0</span><span style="letter-spacing:-0.36px">.</span><span style="letter-spacing:0.68px">0</span><span style="letter-spacing:0.68px">0</span></div><div style="position:absolute;left:1090.5px;top:376px;width:12.5px;height:2px;background:#4a3ae0;"></div><div style="position:absolute;left:1228.5px;top:376px;width:12.5px;height:2px;background:#4a3ae0;"></div><div style="position:absolute;left:1354.5px;top:376px;width:12.5px;height:2px;background:#4a3ae0;"></div><div style="position:absolute;right:403.92px;top:364px;font-size:16.4px;line-height:25px;color:#4a3ae0;font-weight:normal;letter-spacing:0px;white-space:nowrap;"><span style="letter-spacing:0.68px">9</span><span style="letter-spacing:-0.76px">,</span><span style="letter-spacing:0.68px">9</span><span style="letter-spacing:-1.52px">7</span><span style="letter-spacing:0.68px">9</span><span style="letter-spacing:-0.76px">,</span><span style="letter-spacing:-1.52px">7</span><span style="letter-spacing:0.68px">3</span><span style="letter-spacing:0.68px">0</span><span style="letter-spacing:-0.36px">.</span><span style="letter-spacing:0.68px">0</span><span style="letter-spacing:0.68px">0</span></div><div style="position:absolute;left:1617.5px;top:376px;width:12.5px;height:2px;background:#4a3ae0;"></div><div style="position:absolute;left:330px;top:397px;width:1308px;height:1px;background:#e9ecf0;"></div><div style="position:absolute;left:336.6px;top:407px;font-size:16.6px;line-height:25px;color:#1e293b;font-weight:normal;letter-spacing:-0.8px;white-space:nowrap;">106</div><div style="position:absolute;left:494.6px;top:397px;width:153.4px;height:43px;overflow:hidden"><div style="position:absolute;left:0px;top:10px;font-size:16.6px;line-height:25px;color:#1e293b;font-weight:normal;letter-spacing:0.0px;white-space:nowrap;">HSBC</div></div><div style="position:absolute;left:654.6px;top:397px;width:180.4px;height:43px;overflow:hidden"><div style="position:absolute;left:0px;top:10px;font-size:16.8px;line-height:25px;color:#1e293b;font-weight:normal;letter-spacing:0.0px;white-space:nowrap;">Cash and Cash Equivalents</div></div><div style="position:absolute;right:942.92px;top:407px;font-size:16.4px;line-height:25px;color:#4a3ae0;font-weight:normal;letter-spacing:0px;white-space:nowrap;"><span style="letter-spacing:0.68px">4</span><span style="letter-spacing:-0.76px">,</span><span style="letter-spacing:0.68px">9</span><span style="letter-spacing:0.68px">9</span><span style="letter-spacing:0.68px">0</span><span style="letter-spacing:-0.76px">,</span><span style="letter-spacing:0.68px">8</span><span style="letter-spacing:0.68px">5</span><span style="letter-spacing:0.68px">0</span><span style="letter-spacing:-0.36px">.</span><span style="letter-spacing:0.68px">0</span><span style="letter-spacing:0.68px">0</span></div><div style="position:absolute;left:1090.5px;top:419px;width:12.5px;height:2px;background:#4a3ae0;"></div><div style="position:absolute;left:1228.5px;top:419px;width:12.5px;height:2px;background:#4a3ae0;"></div><div style="position:absolute;left:1354.5px;top:419px;width:12.5px;height:2px;background:#4a3ae0;"></div><div style="position:absolute;right:403.92px;top:407px;font-size:16.4px;line-height:25px;color:#4a3ae0;font-weight:normal;letter-spacing:0px;white-space:nowrap;"><span style="letter-spacing:0.68px">4</span><span style="letter-spacing:-0.76px">,</span><span style="letter-spacing:0.68px">9</span><span style="letter-spacing:0.68px">9</span><span style="letter-spacing:0.68px">0</span><span style="letter-spacing:-0.76px">,</span><span style="letter-spacing:0.68px">8</span><span style="letter-spacing:0.68px">5</span><span style="letter-spacing:0.68px">0</span><span style="letter-spacing:-0.36px">.</span><span style="letter-spacing:0.68px">0</span><span style="letter-spacing:0.68px">0</span></div><div style="position:absolute;left:1617.5px;top:419px;width:12.5px;height:2px;background:#4a3ae0;"></div><div style="position:absolute;left:330px;top:441px;width:1308px;height:1px;background:#e9ecf0;"></div><div style="position:absolute;left:336.6px;top:451px;font-size:16.6px;line-height:25px;color:#1e293b;font-weight:normal;letter-spacing:-0.8px;white-space:nowrap;">109</div><div style="position:absolute;left:494.6px;top:441px;width:153.4px;height:43px;overflow:hidden"><div style="position:absolute;left:0px;top:10px;font-size:16.6px;line-height:25px;color:#1e293b;font-weight:normal;letter-spacing:0.0px;white-space:nowrap;">CIB</div></div><div style="position:absolute;left:654.6px;top:441px;width:180.4px;height:43px;overflow:hidden"><div style="position:absolute;left:0px;top:10px;font-size:16.8px;line-height:25px;color:#1e293b;font-weight:normal;letter-spacing:0.0px;white-space:nowrap;">Cash and Cash Equivalents</div></div><div style="position:absolute;right:942.92px;top:451px;font-size:16.4px;line-height:25px;color:#4a3ae0;font-weight:normal;letter-spacing:0px;white-space:nowrap;"><svg width="6.9" height="11.8" viewBox="0 0 6.9 11.8" style="vertical-align:baseline"><path d="M4.5 11.8V0.5M4.7 0.4L1.2 3.1" stroke="#4a3ae0" stroke-width="1.55" fill="none"/></svg><span style="letter-spacing:-0.76px">,</span><span style="letter-spacing:0.68px">8</span><span style="letter-spacing:-1.52px">7</span><span style="letter-spacing:0.68px">5</span><span style="letter-spacing:-0.36px">.</span><span style="letter-spacing:0.68px">0</span><span style="letter-spacing:0.68px">0</span></div><div style="position:absolute;left:1090.5px;top:463px;width:12.5px;height:2px;background:#4a3ae0;"></div><div style="position:absolute;left:1228.5px;top:463px;width:12.5px;height:2px;background:#4a3ae0;"></div><div style="position:absolute;left:1354.5px;top:463px;width:12.5px;height:2px;background:#4a3ae0;"></div><div style="position:absolute;right:403.92px;top:451px;font-size:16.4px;line-height:25px;color:#4a3ae0;font-weight:normal;letter-spacing:0px;white-space:nowrap;"><svg width="6.9" height="11.8" viewBox="0 0 6.9 11.8" style="vertical-align:baseline"><path d="M4.5 11.8V0.5M4.7 0.4L1.2 3.1" stroke="#4a3ae0" stroke-width="1.55" fill="none"/></svg><span style="letter-spacing:-0.76px">,</span><span style="letter-spacing:0.68px">8</span><span style="letter-spacing:-1.52px">7</span><span style="letter-spacing:0.68px">5</span><span style="letter-spacing:-0.36px">.</span><span style="letter-spacing:0.68px">0</span><span style="letter-spacing:0.68px">0</span></div><div style="position:absolute;left:1617.5px;top:463px;width:12.5px;height:2px;background:#4a3ae0;"></div><div style="position:absolute;left:330px;top:485px;width:1308px;height:1px;background:#e9ecf0;"></div><div style="position:absolute;left:336.6px;top:495px;font-size:16.6px;line-height:25px;color:#1e293b;font-weight:normal;letter-spacing:-0.8px;white-space:nowrap;">110</div><div style="position:absolute;left:494.6px;top:485px;width:153.4px;height:43px;overflow:hidden"><div style="position:absolute;left:0px;top:10px;font-size:16.6px;line-height:25px;color:#1e293b;font-weight:normal;letter-spacing:0.0px;white-space:nowrap;">HSBC Prepaid MC - EGP</div></div><div style="position:absolute;left:654.6px;top:485px;width:180.4px;height:43px;overflow:hidden"><div style="position:absolute;left:0px;top:10px;font-size:16.8px;line-height:25px;color:#1e293b;font-weight:normal;letter-spacing:0.0px;white-space:nowrap;">Cash and Cash Equivalents</div></div><div style="position:absolute;right:942.92px;top:495px;font-size:16.4px;line-height:25px;color:#4a3ae0;font-weight:normal;letter-spacing:0px;white-space:nowrap;"><span style="letter-spacing:0.68px">9</span><span style="letter-spacing:-0.76px">,</span><span style="letter-spacing:0.68px">6</span><span style="letter-spacing:0.68px">5</span><span style="letter-spacing:0.68px">5</span><span style="letter-spacing:-0.36px">.</span><span style="letter-spacing:0.68px">0</span><span style="letter-spacing:0.68px">0</span></div><div style="position:absolute;left:1090.5px;top:507px;width:12.5px;height:2px;background:#4a3ae0;"></div><div style="position:absolute;left:1228.5px;top:507px;width:12.5px;height:2px;background:#4a3ae0;"></div><div style="position:absolute;left:1354.5px;top:507px;width:12.5px;height:2px;background:#4a3ae0;"></div><div style="position:absolute;right:403.92px;top:495px;font-size:16.4px;line-height:25px;color:#4a3ae0;font-weight:normal;letter-spacing:0px;white-space:nowrap;"><span style="letter-spacing:0.68px">9</span><span style="letter-spacing:-0.76px">,</span><span style="letter-spacing:0.68px">6</span><span style="letter-spacing:0.68px">5</span><span style="letter-spacing:0.68px">5</span><span style="letter-spacing:-0.36px">.</span><span style="letter-spacing:0.68px">0</span><span style="letter-spacing:0.68px">0</span></div><div style="position:absolute;left:1617.5px;top:507px;width:12.5px;height:2px;background:#4a3ae0;"></div><div style="position:absolute;left:330px;top:529px;width:1308px;height:1px;background:#e9ecf0;"></div><div style="position:absolute;left:336.6px;top:539px;font-size:16.6px;line-height:25px;color:#1e293b;font-weight:normal;letter-spacing:-0.8px;white-space:nowrap;">111</div><div style="position:absolute;left:494.6px;top:528px;width:153.4px;height:43px;overflow:hidden"><div style="position:absolute;left:0px;top:11px;font-size:16.6px;line-height:25px;color:#1e293b;font-weight:normal;letter-spacing:0.0px;white-space:nowrap;">QNB</div></div><div style="position:absolute;left:654.6px;top:528px;width:180.4px;height:43px;overflow:hidden"><div style="position:absolute;left:0px;top:11px;font-size:16.8px;line-height:25px;color:#1e293b;font-weight:normal;letter-spacing:0.0px;white-space:nowrap;">Cash and Cash Equivalents</div></div><div style="position:absolute;right:942.92px;top:539px;font-size:16.4px;line-height:25px;color:#4a3ae0;font-weight:normal;letter-spacing:0px;white-space:nowrap;"><span style="letter-spacing:0.68px">2</span><span style="letter-spacing:-0.76px">,</span><span style="letter-spacing:0.68px">6</span><span style="letter-spacing:0.68px">0</span><span style="letter-spacing:0.68px">0</span><span style="letter-spacing:-0.36px">.</span><span style="letter-spacing:0.68px">0</span><span style="letter-spacing:0.68px">0</span></div><div style="position:absolute;left:1090.5px;top:551px;width:12.5px;height:2px;background:#4a3ae0;"></div><div style="position:absolute;left:1228.5px;top:551px;width:12.5px;height:2px;background:#4a3ae0;"></div><div style="position:absolute;left:1354.5px;top:551px;width:12.5px;height:2px;background:#4a3ae0;"></div><div style="position:absolute;right:403.92px;top:539px;font-size:16.4px;line-height:25px;color:#4a3ae0;font-weight:normal;letter-spacing:0px;white-space:nowrap;"><span style="letter-spacing:0.68px">2</span><span style="letter-spacing:-0.76px">,</span><span style="letter-spacing:0.68px">6</span><span style="letter-spacing:0.68px">0</span><span style="letter-spacing:0.68px">0</span><span style="letter-spacing:-0.36px">.</span><span style="letter-spacing:0.68px">0</span><span style="letter-spacing:0.68px">0</span></div><div style="position:absolute;left:1617.5px;top:551px;width:12.5px;height:2px;background:#4a3ae0;"></div><div style="position:absolute;left:330px;top:572px;width:1308px;height:1px;background:#e9ecf0;"></div><div style="position:absolute;left:336.6px;top:582px;font-size:16.6px;line-height:25px;color:#1e293b;font-weight:normal;letter-spacing:-0.8px;white-space:nowrap;">112</div><div style="position:absolute;left:494.6px;top:572px;width:153.4px;height:43px;overflow:hidden"><div style="position:absolute;left:0px;top:10px;font-size:16.6px;line-height:25px;color:#1e293b;font-weight:normal;letter-spacing:0.0px;white-space:nowrap;">AL-Raghi</div></div><div style="position:absolute;left:654.6px;top:572px;width:180.4px;height:43px;overflow:hidden"><div style="position:absolute;left:0px;top:10px;font-size:16.8px;line-height:25px;color:#1e293b;font-weight:normal;letter-spacing:0.0px;white-space:nowrap;">Cash and Cash Equivalents</div></div><div style="position:absolute;right:942.92px;top:582px;font-size:16.4px;line-height:25px;color:#4a3ae0;font-weight:normal;letter-spacing:0px;white-space:nowrap;"><span style="letter-spacing:0.68px">5</span><span style="letter-spacing:-0.76px">,</span><span style="letter-spacing:0.68px">5</span><span style="letter-spacing:0.68px">0</span><span style="letter-spacing:0.68px">0</span><span style="letter-spacing:-0.36px">.</span><span style="letter-spacing:0.68px">0</span><span style="letter-spacing:0.68px">0</span></div><div style="position:absolute;left:1090.5px;top:594px;width:12.5px;height:2px;background:#4a3ae0;"></div><div style="position:absolute;left:1228.5px;top:594px;width:12.5px;height:2px;background:#4a3ae0;"></div><div style="position:absolute;left:1354.5px;top:594px;width:12.5px;height:2px;background:#4a3ae0;"></div><div style="position:absolute;right:403.92px;top:582px;font-size:16.4px;line-height:25px;color:#4a3ae0;font-weight:normal;letter-spacing:0px;white-space:nowrap;"><span style="letter-spacing:0.68px">5</span><span style="letter-spacing:-0.76px">,</span><span style="letter-spacing:0.68px">5</span><span style="letter-spacing:0.68px">0</span><span style="letter-spacing:0.68px">0</span><span style="letter-spacing:-0.36px">.</span><span style="letter-spacing:0.68px">0</span><span style="letter-spacing:0.68px">0</span></div><div style="position:absolute;left:1617.5px;top:594px;width:12.5px;height:2px;background:#4a3ae0;"></div><div style="position:absolute;left:330px;top:616px;width:1308px;height:1px;background:#e9ecf0;"></div><div style="position:absolute;left:336.6px;top:626px;font-size:16.6px;line-height:25px;color:#1e293b;font-weight:normal;letter-spacing:-0.8px;white-space:nowrap;">113</div><div style="position:absolute;left:494.6px;top:616px;width:153.4px;height:43px;overflow:hidden"><div style="position:absolute;left:0px;top:10px;font-size:16.6px;line-height:25px;color:#1e293b;font-weight:normal;letter-spacing:0.0px;white-space:nowrap;">CIB - EUROPE</div></div><div style="position:absolute;left:654.6px;top:616px;width:180.4px;height:43px;overflow:hidden"><div style="position:absolute;left:0px;top:10px;font-size:16.8px;line-height:25px;color:#1e293b;font-weight:normal;letter-spacing:0.0px;white-space:nowrap;">Cash and Cash Equivalents</div></div><div style="position:absolute;right:942.92px;top:626px;font-size:16.4px;line-height:25px;color:#4a3ae0;font-weight:normal;letter-spacing:0px;white-space:nowrap;"><span style="letter-spacing:0.68px">2</span><svg width="6.9" height="11.8" viewBox="0 0 6.9 11.8" style="vertical-align:baseline"><path d="M4.5 11.8V0.5M4.7 0.4L1.2 3.1" stroke="#4a3ae0" stroke-width="1.55" fill="none"/></svg><span style="letter-spacing:0.68px">3</span><span style="letter-spacing:-0.76px">,</span><span style="letter-spacing:0.68px">6</span><span style="letter-spacing:-1.52px">7</span><svg width="6.9" height="11.8" viewBox="0 0 6.9 11.8" style="vertical-align:baseline"><path d="M4.5 11.8V0.5M4.7 0.4L1.2 3.1" stroke="#4a3ae0" stroke-width="1.55" fill="none"/></svg><span style="letter-spacing:-0.36px">.</span><span style="letter-spacing:-1.52px">7</span><span style="letter-spacing:0.68px">3</span></div><div style="position:absolute;left:1090.5px;top:638px;width:12.5px;height:2px;background:#4a3ae0;"></div><div style="position:absolute;left:1228.5px;top:638px;width:12.5px;height:2px;background:#4a3ae0;"></div><div style="position:absolute;left:1354.5px;top:638px;width:12.5px;height:2px;background:#4a3ae0;"></div><div style="position:absolute;right:403.92px;top:626px;font-size:16.4px;line-height:25px;color:#4a3ae0;font-weight:normal;letter-spacing:0px;white-space:nowrap;"><span style="letter-spacing:0.68px">2</span><svg width="6.9" height="11.8" viewBox="0 0 6.9 11.8" style="vertical-align:baseline"><path d="M4.5 11.8V0.5M4.7 0.4L1.2 3.1" stroke="#4a3ae0" stroke-width="1.55" fill="none"/></svg><span style="letter-spacing:0.68px">3</span><span style="letter-spacing:-0.76px">,</span><span style="letter-spacing:0.68px">6</span><span style="letter-spacing:-1.52px">7</span><svg width="6.9" height="11.8" viewBox="0 0 6.9 11.8" style="vertical-align:baseline"><path d="M4.5 11.8V0.5M4.7 0.4L1.2 3.1" stroke="#4a3ae0" stroke-width="1.55" fill="none"/></svg><span style="letter-spacing:-0.36px">.</span><span style="letter-spacing:-1.52px">7</span><span style="letter-spacing:0.68px">3</span></div><div style="position:absolute;left:1617.5px;top:638px;width:12.5px;height:2px;background:#4a3ae0;"></div><div style="position:absolute;left:330px;top:660px;width:1308px;height:1px;background:#e9ecf0;"></div><div style="position:absolute;left:336.6px;top:670px;font-size:16.6px;line-height:25px;color:#1e293b;font-weight:normal;letter-spacing:-0.8px;white-space:nowrap;">101</div><div style="position:absolute;left:494.6px;top:660px;width:153.4px;height:43px;overflow:hidden"><div style="position:absolute;left:0px;top:10px;font-size:16.6px;line-height:25px;color:#1e293b;font-weight:normal;letter-spacing:0.0px;white-space:nowrap;">Accounts Receivable</div></div><div style="position:absolute;left:654.6px;top:660px;width:180.4px;height:43px;overflow:hidden"><div style="position:absolute;left:0px;top:10px;font-size:16.8px;line-height:25px;color:#1e293b;font-weight:normal;letter-spacing:0.0px;white-space:nowrap;">Current Assets</div></div><div style="position:absolute;right:942.92px;top:670px;font-size:16.4px;line-height:25px;color:#4a3ae0;font-weight:normal;letter-spacing:0px;white-space:nowrap;"><svg width="6.9" height="11.8" viewBox="0 0 6.9 11.8" style="vertical-align:baseline"><path d="M4.5 11.8V0.5M4.7 0.4L1.2 3.1" stroke="#4a3ae0" stroke-width="1.55" fill="none"/></svg><span style="letter-spacing:0.68px">2</span><span style="letter-spacing:-0.76px">,</span><span style="letter-spacing:0.68px">6</span><span style="letter-spacing:0.68px">2</span><span style="letter-spacing:0.68px">0</span><span style="letter-spacing:-0.76px">,</span><span style="letter-spacing:0.68px">4</span><span style="letter-spacing:0.68px">2</span><span style="letter-spacing:0.68px">6</span><span style="letter-spacing:-0.36px">.</span><span style="letter-spacing:-1.52px">7</span><span style="letter-spacing:0.68px">5</span></div><div style="position:absolute;left:1090.5px;top:682px;width:12.5px;height:2px;background:#4a3ae0;"></div><div style="position:absolute;right:667.92px;top:670px;font-size:16.4px;line-height:25px;color:#4a3ae0;font-weight:normal;letter-spacing:0px;white-space:nowrap;"><span style="letter-spacing:0.68px">2</span><span style="letter-spacing:0.68px">2</span><span style="letter-spacing:0.68px">0</span><span style="letter-spacing:-0.36px">.</span><span style="letter-spacing:0.68px">0</span><span style="letter-spacing:0.68px">0</span></div><div style="position:absolute;left:1354.5px;top:682px;width:12.5px;height:2px;background:#4a3ae0;"></div><div style="position:absolute;right:403.92px;top:670px;font-size:16.4px;line-height:25px;color:#4a3ae0;font-weight:normal;letter-spacing:0px;white-space:nowrap;"><svg width="6.9" height="11.8" viewBox="0 0 6.9 11.8" style="vertical-align:baseline"><path d="M4.5 11.8V0.5M4.7 0.4L1.2 3.1" stroke="#4a3ae0" stroke-width="1.55" fill="none"/></svg><span style="letter-spacing:0.68px">2</span><span style="letter-spacing:-0.76px">,</span><span style="letter-spacing:0.68px">6</span><span style="letter-spacing:0.68px">2</span><span style="letter-spacing:0.68px">0</span><span style="letter-spacing:-0.76px">,</span><span style="letter-spacing:0.68px">6</span><span style="letter-spacing:0.68px">4</span><span style="letter-spacing:0.68px">6</span><span style="letter-spacing:-0.36px">.</span><span style="letter-spacing:-1.52px">7</span><span style="letter-spacing:0.68px">5</span></div><div style="position:absolute;left:1617.5px;top:682px;width:12.5px;height:2px;background:#4a3ae0;"></div><div style="position:absolute;left:330px;top:704px;width:1308px;height:1px;background:#e9ecf0;"></div><div style="position:absolute;left:336.6px;top:714px;font-size:16.6px;line-height:25px;color:#1e293b;font-weight:normal;letter-spacing:-0.8px;white-space:nowrap;">106</div><div style="position:absolute;left:494.6px;top:704px;width:153.4px;height:43px;overflow:hidden"><div style="position:absolute;left:0px;top:10px;font-size:16.6px;line-height:25px;color:#1e293b;font-weight:normal;letter-spacing:0.0px;white-space:nowrap;">Prepaid Expenses</div></div><div style="position:absolute;left:654.6px;top:704px;width:180.4px;height:43px;overflow:hidden"><div style="position:absolute;left:0px;top:10px;font-size:16.8px;line-height:25px;color:#1e293b;font-weight:normal;letter-spacing:0.0px;white-space:nowrap;">Current Assets</div></div><div style="position:absolute;right:942.92px;top:714px;font-size:16.4px;line-height:25px;color:#4a3ae0;font-weight:normal;letter-spacing:0px;white-space:nowrap;"><span style="letter-spacing:0.68px">8</span><span style="letter-spacing:-1.52px">7</span><span style="letter-spacing:-0.76px">,</span><span style="letter-spacing:0.68px">8</span><span style="letter-spacing:0.68px">5</span><span style="letter-spacing:0.68px">0</span><span style="letter-spacing:-0.36px">.</span><span style="letter-spacing:0.68px">0</span><span style="letter-spacing:0.68px">0</span></div><div style="position:absolute;left:1090.5px;top:726px;width:12.5px;height:2px;background:#4a3ae0;"></div><div style="position:absolute;left:1228.5px;top:726px;width:12.5px;height:2px;background:#4a3ae0;"></div><div style="position:absolute;left:1354.5px;top:726px;width:12.5px;height:2px;background:#4a3ae0;"></div><div style="position:absolute;right:403.92px;top:714px;font-size:16.4px;line-height:25px;color:#4a3ae0;font-weight:normal;letter-spacing:0px;white-space:nowrap;"><span style="letter-spacing:0.68px">8</span><span style="letter-spacing:-1.52px">7</span><span style="letter-spacing:-0.76px">,</span><span style="letter-spacing:0.68px">8</span><span style="letter-spacing:0.68px">5</span><span style="letter-spacing:0.68px">0</span><span style="letter-spacing:-0.36px">.</span><span style="letter-spacing:0.68px">0</span><span style="letter-spacing:0.68px">0</span></div><div style="position:absolute;left:1617.5px;top:726px;width:12.5px;height:2px;background:#4a3ae0;"></div><div style="position:absolute;left:330px;top:747px;width:1308px;height:1px;background:#e9ecf0;"></div><div style="position:absolute;left:336.6px;top:757px;font-size:16.3px;line-height:24px;color:#1e293b;font-weight:bold;letter-spacing:0.3px;white-space:nowrap;">198</div><svg style="position:absolute;left:472px;top:763.25px;" width="18" height="12" viewBox="0 0 18 12" fill="none"><path d="M3.6 2.5L9.6 8.5 15.6 2.5" stroke="#475569" stroke-width="1.5"/></svg><div style="position:absolute;left:494.6px;top:747px;width:153.4px;height:43px;overflow:hidden"><div style="position:absolute;left:0px;top:10px;font-size:16.6px;line-height:25px;color:#1e293b;font-weight:normal;letter-spacing:0.35px;white-space:nowrap;-webkit-text-stroke:0.35px #1e293b">Inventory</div></div><div style="position:absolute;left:654.6px;top:747px;width:180.4px;height:43px;overflow:hidden"><div style="position:absolute;left:0px;top:10px;font-size:16.8px;line-height:25px;color:#1e293b;font-weight:normal;letter-spacing:0.0px;white-space:nowrap;">Current Assets</div></div><div style="position:absolute;right:942.92px;top:757px;font-size:16.4px;line-height:25px;color:#4a3ae0;font-weight:normal;letter-spacing:0px;white-space:nowrap;"><svg width="6.9" height="11.8" viewBox="0 0 6.9 11.8" style="vertical-align:baseline"><path d="M4.5 11.8V0.5M4.7 0.4L1.2 3.1" stroke="#4a3ae0" stroke-width="1.55" fill="none"/></svg><span style="letter-spacing:0.68px">0</span><span style="letter-spacing:-0.76px">,</span><span style="letter-spacing:0.68px">0</span><span style="letter-spacing:0.68px">0</span><span style="letter-spacing:0.68px">0</span><span style="letter-spacing:-0.36px">.</span><span style="letter-spacing:0.68px">0</span><span style="letter-spacing:0.68px">0</span></div><div style="position:absolute;left:1090.5px;top:769px;width:12.5px;height:2px;background:#4a3ae0;"></div><div style="position:absolute;left:1228.5px;top:769px;width:12.5px;height:2px;background:#4a3ae0;"></div><div style="position:absolute;left:1354.5px;top:769px;width:12.5px;height:2px;background:#4a3ae0;"></div><div style="position:absolute;right:403.92px;top:757px;font-size:16.4px;line-height:25px;color:#4a3ae0;font-weight:normal;letter-spacing:0px;white-space:nowrap;"><svg width="6.9" height="11.8" viewBox="0 0 6.9 11.8" style="vertical-align:baseline"><path d="M4.5 11.8V0.5M4.7 0.4L1.2 3.1" stroke="#4a3ae0" stroke-width="1.55" fill="none"/></svg><span style="letter-spacing:0.68px">0</span><span style="letter-spacing:-0.76px">,</span><span style="letter-spacing:0.68px">0</span><span style="letter-spacing:0.68px">0</span><span style="letter-spacing:0.68px">0</span><span style="letter-spacing:-0.36px">.</span><span style="letter-spacing:0.68px">0</span><span style="letter-spacing:0.68px">0</span></div><div style="position:absolute;left:1617.5px;top:769px;width:12.5px;height:2px;background:#4a3ae0;"></div><div style="position:absolute;left:330px;top:791px;width:1308px;height:1px;background:#e9ecf0;"></div><div style="position:absolute;left:355.4px;top:801px;font-size:16.6px;line-height:25px;color:#1e293b;font-weight:normal;letter-spacing:-0.8px;white-space:nowrap;">199</div><div style="position:absolute;left:513px;top:791px;width:135.0px;height:43px;overflow:hidden"><div style="position:absolute;left:0px;top:10px;font-size:16.6px;line-height:25px;color:#1e293b;font-weight:normal;letter-spacing:0.0px;white-space:nowrap;">Primary Warehouse</div></div><div style="position:absolute;left:654.6px;top:791px;width:180.4px;height:43px;overflow:hidden"><div style="position:absolute;left:0px;top:10px;font-size:16.8px;line-height:25px;color:#1e293b;font-weight:normal;letter-spacing:0.0px;white-space:nowrap;">Current Assets</div></div><div style="position:absolute;right:942.92px;top:801px;font-size:16.4px;line-height:25px;color:#4a3ae0;font-weight:normal;letter-spacing:0px;white-space:nowrap;"><span style="letter-spacing:0.68px">5</span><span style="letter-spacing:0.68px">0</span><span style="letter-spacing:0.68px">0</span><span style="letter-spacing:-0.76px">,</span><svg width="6.9" height="11.8" viewBox="0 0 6.9 11.8" style="vertical-align:baseline"><path d="M4.5 11.8V0.5M4.7 0.4L1.2 3.1" stroke="#4a3ae0" stroke-width="1.55" fill="none"/></svg><span style="letter-spacing:0.68px">9</span><span style="letter-spacing:0.68px">0</span><span style="letter-spacing:-0.36px">.</span><span style="letter-spacing:0.68px">0</span><span style="letter-spacing:0.68px">0</span></div><div style="position:absolute;left:1090.5px;top:813px;width:12.5px;height:2px;background:#4a3ae0;"></div><div style="position:absolute;left:1228.5px;top:813px;width:12.5px;height:2px;background:#4a3ae0;"></div><div style="position:absolute;left:1354.5px;top:813px;width:12.5px;height:2px;background:#4a3ae0;"></div><div style="position:absolute;right:403.92px;top:801px;font-size:16.4px;line-height:25px;color:#4a3ae0;font-weight:normal;letter-spacing:0px;white-space:nowrap;"><span style="letter-spacing:0.68px">5</span><span style="letter-spacing:0.68px">0</span><span style="letter-spacing:0.68px">0</span><span style="letter-spacing:-0.76px">,</span><svg width="6.9" height="11.8" viewBox="0 0 6.9 11.8" style="vertical-align:baseline"><path d="M4.5 11.8V0.5M4.7 0.4L1.2 3.1" stroke="#4a3ae0" stroke-width="1.55" fill="none"/></svg><span style="letter-spacing:0.68px">9</span><span style="letter-spacing:0.68px">0</span><span style="letter-spacing:-0.36px">.</span><span style="letter-spacing:0.68px">0</span><span style="letter-spacing:0.68px">0</span></div><div style="position:absolute;left:1617.5px;top:813px;width:12.5px;height:2px;background:#4a3ae0;"></div><div style="position:absolute;left:330px;top:835px;width:1308px;height:1px;background:#e9ecf0;"></div><div style="position:absolute;left:355.4px;top:845px;font-size:16.6px;line-height:25px;color:#1e293b;font-weight:normal;letter-spacing:-0.8px;white-space:nowrap;">200</div><div style="position:absolute;left:513px;top:835px;width:135.0px;height:43px;overflow:hidden"><div style="position:absolute;left:0px;top:10px;font-size:16.6px;line-height:25px;color:#1e293b;font-weight:normal;letter-spacing:0.0px;white-space:nowrap;">Primary warehouse 2</div></div><div style="position:absolute;left:654.6px;top:835px;width:180.4px;height:43px;overflow:hidden"><div style="position:absolute;left:0px;top:10px;font-size:16.8px;line-height:25px;color:#1e293b;font-weight:normal;letter-spacing:0.0px;white-space:nowrap;">Current Assets</div></div><div style="position:absolute;left:953.5px;top:857px;width:12.5px;height:2px;background:#4a3ae0;"></div><div style="position:absolute;right:805.92px;top:845px;font-size:16.4px;line-height:25px;color:#4a3ae0;font-weight:normal;letter-spacing:0px;white-space:nowrap;"><span style="letter-spacing:0.68px">5</span><span style="letter-spacing:0.68px">0</span><span style="letter-spacing:-0.36px">.</span><span style="letter-spacing:0.68px">0</span><span style="letter-spacing:0.68px">0</span></div><div style="position:absolute;left:1228.5px;top:857px;width:12.5px;height:2px;background:#4a3ae0;"></div><div style="position:absolute;left:1354.5px;top:857px;width:12.5px;height:2px;background:#4a3ae0;"></div><div style="position:absolute;left:1492.5px;top:857px;width:12.5px;height:2px;background:#4a3ae0;"></div><div style="position:absolute;right:278.92px;top:845px;font-size:16.4px;line-height:25px;color:#4a3ae0;font-weight:normal;letter-spacing:0px;white-space:nowrap;"><span style="letter-spacing:0.68px">5</span><span style="letter-spacing:0.68px">0</span><span style="letter-spacing:-0.36px">.</span><span style="letter-spacing:0.68px">0</span><span style="letter-spacing:0.68px">0</span></div><div style="position:absolute;left:330px;top:879px;width:1308px;height:1px;background:#e9ecf0;"></div><div style="position:absolute;left:355.4px;top:889px;font-size:16.6px;line-height:25px;color:#1e293b;font-weight:normal;letter-spacing:-0.8px;white-space:nowrap;">202</div><div style="position:absolute;left:513px;top:878px;width:135.0px;height:43px;overflow:hidden"><div style="position:absolute;left:0px;top:11px;font-size:16.6px;line-height:25px;color:#1e293b;font-weight:normal;letter-spacing:0.0px;white-space:nowrap;">Al Khobar Warehouse</div></div><div style="position:absolute;left:654.6px;top:878px;width:180.4px;height:43px;overflow:hidden"><div style="position:absolute;left:0px;top:11px;font-size:16.8px;line-height:25px;color:#1e293b;font-weight:normal;letter-spacing:0.0px;white-space:nowrap;">Current Assets</div></div><div style="position:absolute;left:953.5px;top:901px;width:12.5px;height:2px;background:#4a3ae0;"></div><div style="position:absolute;right:805.92px;top:889px;font-size:16.4px;line-height:25px;color:#4a3ae0;font-weight:normal;letter-spacing:0px;white-space:nowrap;"><span style="letter-spacing:0.68px">8</span><span style="letter-spacing:0.68px">0</span><span style="letter-spacing:0.68px">6</span><span style="letter-spacing:-0.36px">.</span><span style="letter-spacing:-1.52px">7</span><span style="letter-spacing:0.68px">0</span></div><div style="position:absolute;left:1228.5px;top:901px;width:12.5px;height:2px;background:#4a3ae0;"></div><div style="position:absolute;left:1354.5px;top:901px;width:12.5px;height:2px;background:#4a3ae0;"></div><div style="position:absolute;left:1492.5px;top:901px;width:12.5px;height:2px;background:#4a3ae0;"></div><div style="position:absolute;right:278.92px;top:889px;font-size:16.4px;line-height:25px;color:#4a3ae0;font-weight:normal;letter-spacing:0px;white-space:nowrap;"><span style="letter-spacing:0.68px">8</span><span style="letter-spacing:0.68px">0</span><span style="letter-spacing:0.68px">6</span><span style="letter-spacing:-0.36px">.</span><span style="letter-spacing:-1.52px">7</span><span style="letter-spacing:0.68px">0</span></div><div style="position:absolute;left:330px;top:922px;width:1308px;height:1px;background:#e9ecf0;"></div><div style="position:absolute;left:336.6px;top:932px;font-size:16.6px;line-height:25px;color:#1e293b;font-weight:normal;letter-spacing:-0.8px;white-space:nowrap;">102</div><div style="position:absolute;left:494.6px;top:922px;width:153.4px;height:43px;overflow:hidden"><div style="position:absolute;left:0px;top:10px;font-size:16.6px;line-height:25px;color:#1e293b;font-weight:normal;letter-spacing:0.0px;white-space:nowrap;">Furniture and Equipment</div></div><div style="position:absolute;left:654.6px;top:922px;width:180.4px;height:43px;overflow:hidden"><div style="position:absolute;left:0px;top:10px;font-size:16.8px;line-height:25px;color:#1e293b;font-weight:normal;letter-spacing:0.0px;white-space:nowrap;">Fixed Asset</div></div><div style="position:absolute;right:942.92px;top:932px;font-size:16.4px;line-height:25px;color:#4a3ae0;font-weight:normal;letter-spacing:0px;white-space:nowrap;"><span style="letter-spacing:0.68px">2</span><span style="letter-spacing:0.68px">0</span><span style="letter-spacing:-0.76px">,</span><span style="letter-spacing:0.68px">0</span><span style="letter-spacing:0.68px">0</span><span style="letter-spacing:0.68px">0</span><span style="letter-spacing:-0.36px">.</span><span style="letter-spacing:0.68px">0</span><span style="letter-spacing:0.68px">0</span></div><div style="position:absolute;left:1090.5px;top:944px;width:12.5px;height:2px;background:#4a3ae0;"></div><div style="position:absolute;left:1228.5px;top:944px;width:12.5px;height:2px;background:#4a3ae0;"></div><div style="position:absolute;left:1354.5px;top:944px;width:12.5px;height:2px;background:#4a3ae0;"></div><div style="position:absolute;right:403.92px;top:932px;font-size:16.4px;line-height:25px;color:#4a3ae0;font-weight:normal;letter-spacing:0px;white-space:nowrap;"><span style="letter-spacing:0.68px">2</span><span style="letter-spacing:0.68px">0</span><span style="letter-spacing:-0.76px">,</span><span style="letter-spacing:0.68px">0</span><span style="letter-spacing:0.68px">0</span><span style="letter-spacing:0.68px">0</span><span style="letter-spacing:-0.36px">.</span><span style="letter-spacing:0.68px">0</span><span style="letter-spacing:0.68px">0</span></div><div style="position:absolute;left:1617.5px;top:944px;width:12.5px;height:2px;background:#4a3ae0;"></div><div style="position:absolute;left:462px;top:267px;width:1px;height:684px;background:#e9ecf0;"></div><div style="position:absolute;left:648px;top:267px;width:1px;height:684px;background:#e9ecf0;"></div><div style="position:absolute;left:835px;top:267px;width:1px;height:684px;background:#e9ecf0;"></div><div style="position:absolute;left:973px;top:267px;width:1px;height:684px;background:#e9ecf0;"></div><div style="position:absolute;left:1110px;top:267px;width:1px;height:684px;background:#e9ecf0;"></div><div style="position:absolute;left:1248px;top:267px;width:1px;height:684px;background:#e9ecf0;"></div><div style="position:absolute;left:1374px;top:267px;width:1px;height:684px;background:#e9ecf0;"></div><div style="position:absolute;left:1512px;top:267px;width:1px;height:684px;background:#e9ecf0;"></div><div style="position:absolute;left:1637px;top:267px;width:1px;height:684px;background:#e9ecf0;"></div><div style="position:absolute;left:330px;top:951px;width:1580px;height:11px;background:#f1f5f9;"></div><div style="position:absolute;left:330px;top:951px;width:1580px;height:1px;background:#e2e8f0;"></div><div style="position:absolute;left:343px;top:954px;font-size:18.0px;line-height:27px;color:#1e293b;font-weight:normal;letter-spacing:0px;white-space:nowrap;">So</div><div style="position:absolute;left:401px;top:954px;font-size:18.0px;line-height:27px;color:#1e293b;font-weight:normal;letter-spacing:0px;white-space:nowrap;">Count</div><div style="position:absolute;left:1907px;top:271px;width:3px;height:254px;background:#cdd3dc;border-radius:2px;"></div><div style="position:absolute;left:1832px;top:890px;width:60px;height:60px;background:#525cd3;border-radius:50%;"></div><svg style="position:absolute;left:1832px;top:890px;" width="60" height="60" viewBox="0 0 60 60" fill="none"><rect x="15" y="17.7" width="30.2" height="21.7" rx="5.5" fill="#eef1fa"/><path d="M33 39L40 45 40 39Z" fill="#eef1fa"/></svg>
</body></html>
